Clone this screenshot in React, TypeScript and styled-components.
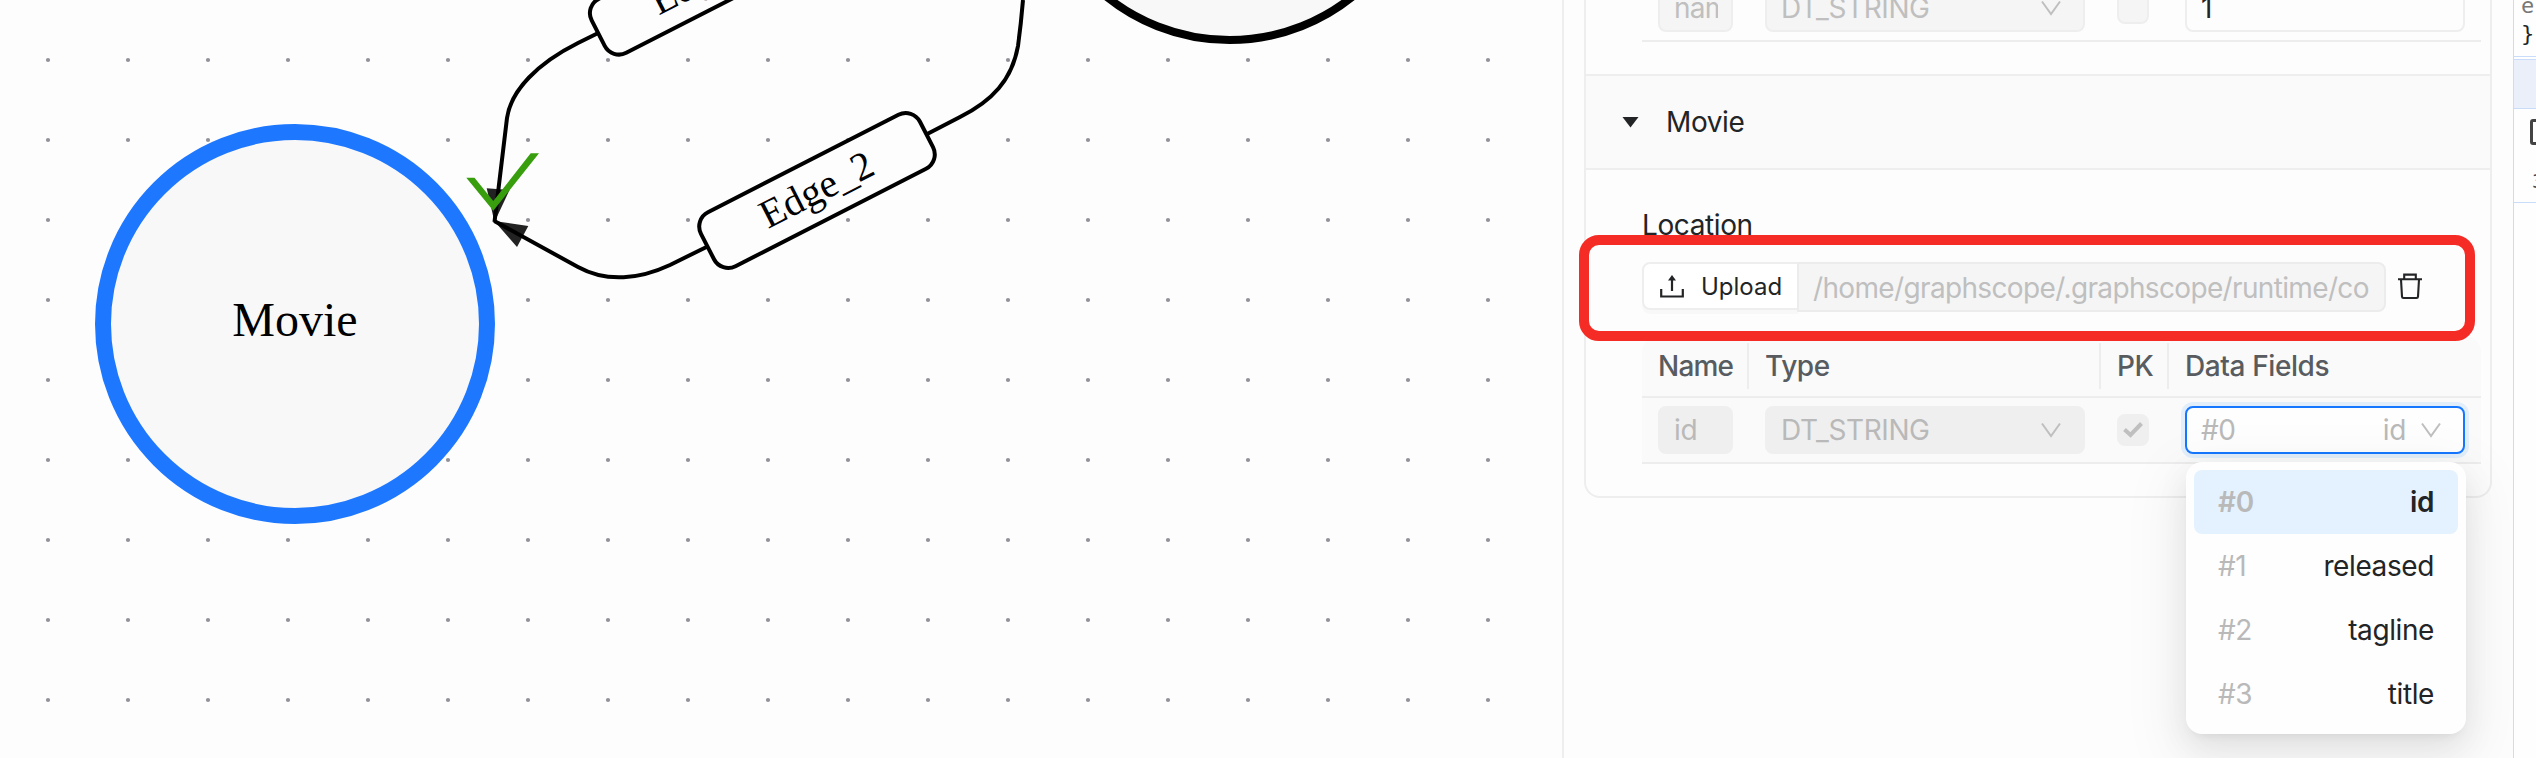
import React from 'react';
import styled, { createGlobalStyle, css } from 'styled-components';

const Global = createGlobalStyle`
  * { box-sizing: border-box; }
  body { margin: 0; background: #fdfdfd; font-family: Inter, "Liberation Sans", sans-serif; }
`;

const Page = styled.div`
  display: flex;
  width: 2536px;
  height: 758px;
  overflow: hidden;
  font-size: 28px;
  color: #222426;
`;

const Canvas = styled.svg`
  flex: none;
  display: block;
  width: 1562px;
  height: 758px;
  font-family: "Liberation Serif", "Times New Roman", serif;
`;

const Panel = styled.aside`
  flex: none;
  width: 951px;
  border-left: 2px solid #eeeeee;
  padding-left: 20px;
`;

const Collapse = styled.div`
  position: relative;
  width: 908px;
  height: 498px;
  border: 2px solid #eeeeee;
  border-top: 0;
  border-radius: 0 0 16px 16px;
`;

const PreviousBody = styled.div`
  display: flex;
  flex-direction: column;
  justify-content: flex-end;
  height: 74px;
  padding: 0 0 32px 56px;
`;

const SectionHeader = styled.div`
  display: flex;
  align-items: center;
  height: 96px;
  padding-left: 36px;
  border: solid #eeeeee;
  border-width: 2px 0;
  background: #fafafa;
`;

const Caret = styled.svg`
  width: 17px;
  height: 11px;
  margin-right: 27px;
`;

const Text = styled.span<{ $spacing?: number }>`
  letter-spacing: ${(p) => p.$spacing ?? -0.4}px;
  white-space: nowrap;
`;

const SectionBody = styled.div`
  padding: 38px 0 0 56px;
`;

const Label = styled.div`
  height: 54px;
  line-height: 34px;
`;

const UploadRow = styled.div`
  display: flex;
  align-items: flex-start;
  height: 74px;
`;

const UploadButton = styled.button`
  display: flex;
  align-items: center;
  width: 156px;
  height: 48px;
  padding: 0 0 0 16px;
  border: 2px solid #eeeeee;
  border-right-width: 1px;
  border-radius: 8px 0 0 8px;
  background: #ffffff;
  box-shadow: 0 4px 0 rgba(0, 0, 0, 0.02);
  font: 24px Inter, sans-serif;
  color: #222426;
`;

const UploadIcon = styled.svg`
  width: 24px;
  height: 24px;
  margin-right: 17px;
`;

const PathInput = styled.div`
  width: 589px;
  height: 50px;
  margin-left: -1px;
  padding: 0 16px 0 14px;
  border: 2px solid #ececec;
  border-radius: 0 8px 8px 0;
  background: #f5f5f5;
  color: #bfbfbf;
  line-height: 48px;
  overflow: hidden;
`;

const TrashIcon = styled.svg`
  width: 24px;
  height: 28px;
  margin: 10px 0 0 12px;
`;

const Row = styled.div<{ $header?: boolean; $filled?: boolean }>`
  display: grid;
  flex: none;
  grid-template-columns: 107px 352px 68px 312px;
  align-items: center;
  width: 839px;
  height: ${(p) => (p.$header ? 62 : 66)}px;
  border-bottom: 2px solid #ededed;
  background: ${(p) => (p.$header || p.$filled ? '#fafafa' : 'transparent')};
  ${(p) => p.$header && css`
    border-radius: 16px 16px 0 0;
    font-weight: 500;
    color: #585c60;
  `}
`;

const Head = styled.div<{ $last?: boolean }>`
  height: 46px;
  line-height: 46px;
  padding-left: 16px;
  border-right: ${(p) => (p.$last ? '0' : '2px solid #ededed')};
`;

const Cell = styled.div`
  padding: 0 16px;
`;

type Tone = 'outlined' | 'filled' | 'plain' | 'focused';

const tones = {
  outlined: css`background: #f5f5f5; border-color: #eeeeee; color: #bfbfbf;`,
  filled: css`background: #efefef; border-color: #efefef; color: #b9b9b9;`,
  plain: css`background: transparent; border-color: #eeeeee;`,
  focused: css`
    background: #fefefe;
    border-color: #1677ff;
    color: #b9b9b9;
    box-shadow: 0 0 0 4px #e2eefa;
  `,
};

const Field = styled.div<{ $tone: Tone; $width: number }>`
  display: flex;
  align-items: center;
  width: ${(p) => p.$width}px;
  height: 48px;
  padding: 0 14px;
  border: 2px solid;
  border-radius: 8px;
  overflow: hidden;
  ${(p) => tones[p.$tone]}
`;

const Clip = styled.span`
  flex: none;
  width: 44px;
  overflow: hidden;
`;

const Check = styled.div<{ $tone: Tone }>`
  display: flex;
  align-items: center;
  justify-content: center;
  width: 32px;
  height: 32px;
  border: 2px solid;
  border-radius: 8px;
  ${(p) => tones[p.$tone]}
`;

const Spacer = styled.span`
  flex: 1;
`;

const ChevronSvg = styled.svg`
  flex: none;
  width: 20px;
  height: 16px;
  margin: 0 8px 0 15px;
`;

const Highlight = styled.div`
  position: absolute;
  left: -7px;
  top: 235px;
  width: 896px;
  height: 106px;
  border: 10px solid #f52c25;
  border-radius: 20px;
`;

const Menu = styled.ul`
  position: absolute;
  left: 600px;
  top: 462px;
  width: 280px;
  margin: 0;
  padding: 8px;
  list-style: none;
  border-radius: 16px;
  background: #fefefe;
  box-shadow: 0 12px 32px rgba(0, 0, 0, 0.08), 0 6px 12px -8px rgba(0, 0, 0, 0.12),
    0 18px 56px 16px rgba(0, 0, 0, 0.05);
`;

const Option = styled.li<{ $active?: boolean }>`
  display: flex;
  align-items: center;
  justify-content: space-between;
  height: 64px;
  padding: 0 24px;
  border-radius: 8px;
  font-weight: ${(p) => (p.$active ? 600 : 400)};
  background: ${(p) => (p.$active ? '#e4f2ff' : 'transparent')};
`;

const Index = styled(Text)`
  color: #b9b9b9;
`;

const CodePane = styled.section`
  position: relative;
  flex: none;
  width: 23px;
  overflow: hidden;
  border-left: 1px solid #c9dcfa;
  background: #fefefe;
`;

const CodeLines = styled.div`
  display: flex;
  flex-direction: column;
  justify-content: flex-end;
  height: 57px;
  padding: 0 0 8px 7px;
  border-bottom: 1px solid #c9dcfa;
  font: 22px/28px "DejaVu Sans Mono", monospace;
`;

const CodeLine = styled.span<{ $faded?: boolean }>`
  white-space: pre;
  color: ${(p) => (p.$faded ? '#777777' : '#222426')};
`;

const CodeHeader = styled.div`
  height: 50px;
  margin-top: 2px;
  border: solid #c9dcfa;
  border-width: 1px 0;
  background: #ebeff9;
`;

const CodeTools = styled.div`
  display: flex;
  flex-direction: column;
  height: 94px;
  padding: 10px 0 0 16px;
  border-bottom: 1px solid #c9dcfa;
  color: #444444;
`;

const BoxOutline = styled.span`
  flex: none;
  width: 25px;
  height: 26px;
  border: 3px solid #444444;
  border-radius: 3px;
`;

const LineCount = styled.span`
  margin: 22px 0 0 2px;
  font: 20px/28px "DejaVu Sans Mono", monospace;
`;

const Chevron = () => (
  <ChevronSvg viewBox="0 0 20 16">
    <path d="M1 1.5 L10 14 L19 1.5" fill="none" stroke="#bfbfbf" strokeWidth="2" />
  </ChevronSvg>
);

const EdgeLabel = ({ x, y, name }: { x: number; y: number; name: string }) => (
  <g transform={`translate(${x} ${y}) rotate(-27.1)`}>
    <rect x={-123} y={-30.3} width={246} height={60.6} rx={16} fill="#fdfdfd" stroke="#000" strokeWidth={4} />
    <text y={12} fontSize={40} textAnchor="middle">{name}</text>
  </g>
);

const Graph = () => (
  <Canvas viewBox="0 0 1562 758">
    <defs>
      <pattern id="dots" x="8" y="20" width="80" height="80" patternUnits="userSpaceOnUse">
        <circle cx="40" cy="40" r="2.1" fill="#91919a" />
      </pattern>
    </defs>
    <rect width="1520" height="758" fill="url(#dots)" />
    <circle cx="1229.5" cy="-156" r="196" fill="#f8f8f8" stroke="#000" strokeWidth="8" />
    <circle cx="295" cy="324" r="192" fill="#f8f8f8" stroke="#1e78ff" strokeWidth="16" />
    <text x="295" y="336" fontSize="48" textAnchor="middle">Movie</text>
    <g fill="#222">
      <path d="M494.5 222 L486.7 188.3 L509.5 190 Z" />
      <path d="M494.3 221 L528.3 226 L517 247 Z" />
    </g>
    <g fill="none" stroke="#000" strokeWidth="4">
      <path d="M597.7 33.3 L578 43 C538 63 511 90 507 118 L494.5 222" />
      <path d="M494.3 221 L578 267 C607 283 640 279 670 265 L707 246.7" />
      <path d="M926.7 134.3 L960 117 C992 101 1012 80 1018 46 Q1021 24 1023 0" />
    </g>
    <EdgeLabel x={707.7} y={-22.9} name="Edge_1" />
    <EdgeLabel x={817} y={190.5} name="Edge_2" />
    <path d="M466.3 177.7 H474.5 L493.3 201 L530.7 153.3 H539 L493.3 210.7 Z" fill="#389e0d" />
  </Canvas>
);

const options = ['id', 'released', 'tagline', 'title'];

export default function App() {
  return (
    <Page>
      <Global />
      <Graph />
      <Panel>
        <Collapse>
          <PreviousBody>
            <Row>
              <Cell><Field $tone="outlined" $width={75}><Clip><Text $spacing={-0.8}>name</Text></Clip></Field></Cell>
              <Cell>
                <Field $tone="outlined" $width={320}><Text>DT_STRING</Text><Spacer /><Chevron /></Field>
              </Cell>
              <Cell><Check $tone="outlined" /></Cell>
              <Cell><Field $tone="plain" $width={280}><Text>1</Text></Field></Cell>
            </Row>
          </PreviousBody>
          <SectionHeader>
            <Caret viewBox="0 0 17 11"><path d="M0.5 0 H16.5 L8.5 10.5 Z" fill="#222426" /></Caret>
            <Text>Movie</Text>
          </SectionHeader>
          <SectionBody>
            <Label><Text>Location</Text></Label>
            <UploadRow>
              <UploadButton>
                <UploadIcon viewBox="0 0 24 24">
                  <path d="M1.2 15 V22.5 H22.8 V15 M12 17 V4" fill="none" stroke="#222426" strokeWidth="2.2" />
                  <path d="M12 1 L16 6.5 H8 Z" fill="#222426" />
                </UploadIcon>
                <Text $spacing={0}>Upload</Text>
              </UploadButton>
              <PathInput><Text $spacing={-0.65}>/home/graphscope/.graphscope/runtime/co</Text></PathInput>
              <TrashIcon viewBox="0 0 24 28">
                <path
                  d="M0 7.2 H24 M6.2 7 V2.6 H17.8 V7 M3 7.5 L4 24.6 Q4.1 26 5.5 26 H18.5 Q19.9 26 20 24.6 L21 7.5"
                  fill="none" stroke="#222426" strokeWidth="2.1"
                />
              </TrashIcon>
            </UploadRow>
            <Row $header>
              <Head><Text $spacing={-0.8}>Name</Text></Head>
              <Head><Text>Type</Text></Head>
              <Head><Text>PK</Text></Head>
              <Head $last><Text>Data Fields</Text></Head>
            </Row>
            <Row $filled>
              <Cell><Field $tone="filled" $width={75}><Text>id</Text></Field></Cell>
              <Cell>
                <Field $tone="filled" $width={320}><Text>DT_STRING</Text><Spacer /><Chevron /></Field>
              </Cell>
              <Cell>
                <Check $tone="filled">
                  <svg width="20" height="16" viewBox="0 0 20 16">
                    <path d="M1.5 7.5 L7.5 13 L18.5 1.5" fill="none" stroke="#bfbfbf" strokeWidth="4" />
                  </svg>
                </Check>
              </Cell>
              <Cell>
                <Field $tone="focused" $width={280}>
                  <Text>#0</Text><Spacer /><Text>id</Text><Chevron />
                </Field>
              </Cell>
            </Row>
          </SectionBody>
          <Menu>
            {options.map((name, i) => (
              <Option key={name} $active={i === 0}>
                <Index>#{i}</Index>
                <Text>{name}</Text>
              </Option>
            ))}
          </Menu>
          <Highlight />
        </Collapse>
      </Panel>
      <CodePane>
        <CodeLines>
          <CodeLine $faded>e'</CodeLine>
          <CodeLine>{'}'}</CodeLine>
        </CodeLines>
        <CodeHeader />
        <CodeTools>
          <BoxOutline />
          <LineCount>3</LineCount>
        </CodeTools>
      </CodePane>
    </Page>
  );
}
